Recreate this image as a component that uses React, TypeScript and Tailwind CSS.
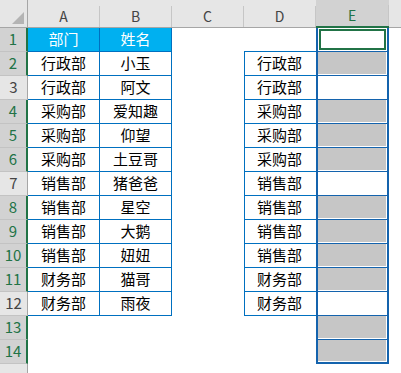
import React from 'react';

const dataRows: [string, string][] = [
  ['行政部', '小玉'],
  ['行政部', '阿文'],
  ['采购部', '爱知趣'],
  ['采购部', '仰望'],
  ['采购部', '土豆哥'],
  ['销售部', '猪爸爸'],
  ['销售部', '星空'],
  ['销售部', '大鹅'],
  ['销售部', '妞妞'],
  ['财务部', '猫哥'],
  ['财务部', '雨夜'],
];

const deptList = [
  '行政部',
  '行政部',
  '采购部',
  '采购部',
  '采购部',
  '销售部',
  '销售部',
  '销售部',
  '销售部',
  '财务部',
  '财务部',
];

// rows in column E that are not part of the selection
const unselected = [3, 7, 12];

function ColHeader({ label, active }: { label: string; active?: boolean }) {
  return (
    <div
      className={`flex flex-col ${
        active ? 'border-b-2 border-[#217346] bg-[#d2d2d2]' : 'border-b border-[#a6a6a6] bg-[#e6e6e6]'
      }`}
    >
      <div className="h-[10px]" />
      <div
        className={`flex flex-1 items-center justify-center border-r border-[#c6c6c6] text-[14px] ${
          active ? 'text-[#217346]' : 'text-[#444]'
        }`}
      >
        {label}
      </div>
    </div>
  );
}

function RowHeader({ n }: { n: number }) {
  const sel = !unselected.includes(n);
  return (
    <div
      className={`flex items-center justify-center border-b border-[#c3c3c3] text-[15px] ${
        sel
          ? 'border-r-2 border-r-[#217346] bg-[#d2d2d2] text-[#217346]'
          : 'border-r border-r-[#a6a6a6] bg-[#e6e6e6] text-[#444]'
      }`}
    >
      {n}
    </div>
  );
}

function ECell({ n }: { n: number }) {
  const last = n === 14;
  const sel = !unselected.includes(n);
  return (
    <div
      className={`flex border-x-2 border-[#1463ad] ${last ? 'border-b-2' : 'border-b'}`}
    >
      {n === 1 ? (
        <div className="m-[1px] flex-1 border-2 border-[#217346] bg-white" />
      ) : (
        <div className={`mr-[1px] mb-[1px] flex-1 ${sel ? 'bg-[#c6c6c6]' : 'bg-white'}`} />
      )}
    </div>
  );
}

export default function App() {
  const rows = Array.from({ length: 14 }, (_, i) => i + 1);

  return (
    <div
      className="h-[373px] w-[401px] overflow-hidden bg-white text-black"
      style={{ fontFamily: '"Noto Sans CJK SC", "Liberation Sans", sans-serif' }}
    >
      <div className="grid grid-cols-[28px_72px_72px_72px_72px_73px_1fr] grid-rows-[28px_repeat(14,24px)_9px]">
        {/* Column headers */}
        <div className="flex items-end justify-end border-r border-b border-[#a6a6a6] bg-[#e6e6e6] p-[3px]">
          <svg width="12" height="12" viewBox="0 0 12 12">
            <polygon points="12,0 12,12 0,12" fill="#b4b4b4" />
          </svg>
        </div>
        <ColHeader label="A" />
        <ColHeader label="B" />
        <ColHeader label="C" />
        <ColHeader label="D" />
        <ColHeader label="E" active />
        <div className="border-b border-[#a6a6a6] bg-[#e6e6e6]" />

        {rows.map((n) => {
          const inTable = n <= 12;
          const isHead = n === 1;
          const ab = n >= 2 && n <= 12 ? dataRows[n - 2] : null;
          const dept = n >= 2 && n <= 12 ? deptList[n - 2] : null;
          const tableCell = isHead
            ? 'bg-[#00b0f0] text-white'
            : 'bg-white text-black';
          return (
            <React.Fragment key={n}>
              <RowHeader n={n} />
              {inTable ? (
                <>
                  <div
                    className={`flex items-center justify-center border-r border-b border-[#0070c0] text-[15px] ${tableCell}`}
                  >
                    {isHead ? '部门' : ab?.[0]}
                  </div>
                  <div
                    className={`flex items-center justify-center border-r border-b border-[#0070c0] text-[15px] ${tableCell}`}
                  >
                    {isHead ? '姓名' : ab?.[1]}
                  </div>
                </>
              ) : (
                <>
                  <div />
                  <div />
                </>
              )}
              <div />
              {n === 1 ? (
                <div className="border-b border-[#0070c0]" />
              ) : dept ? (
                <div className="flex items-center justify-center border-b border-l border-[#0070c0] pr-[2px] text-[15px]">
                  {dept}
                </div>
              ) : (
                <div />
              )}
              <ECell n={n} />
              <div />
            </React.Fragment>
          );
        })}

        {/* partial row 15 */}
        <div className="border-r border-[#a6a6a6] bg-[#e6e6e6]" />
        <div className="col-span-6" />
      </div>
    </div>
  );
}
